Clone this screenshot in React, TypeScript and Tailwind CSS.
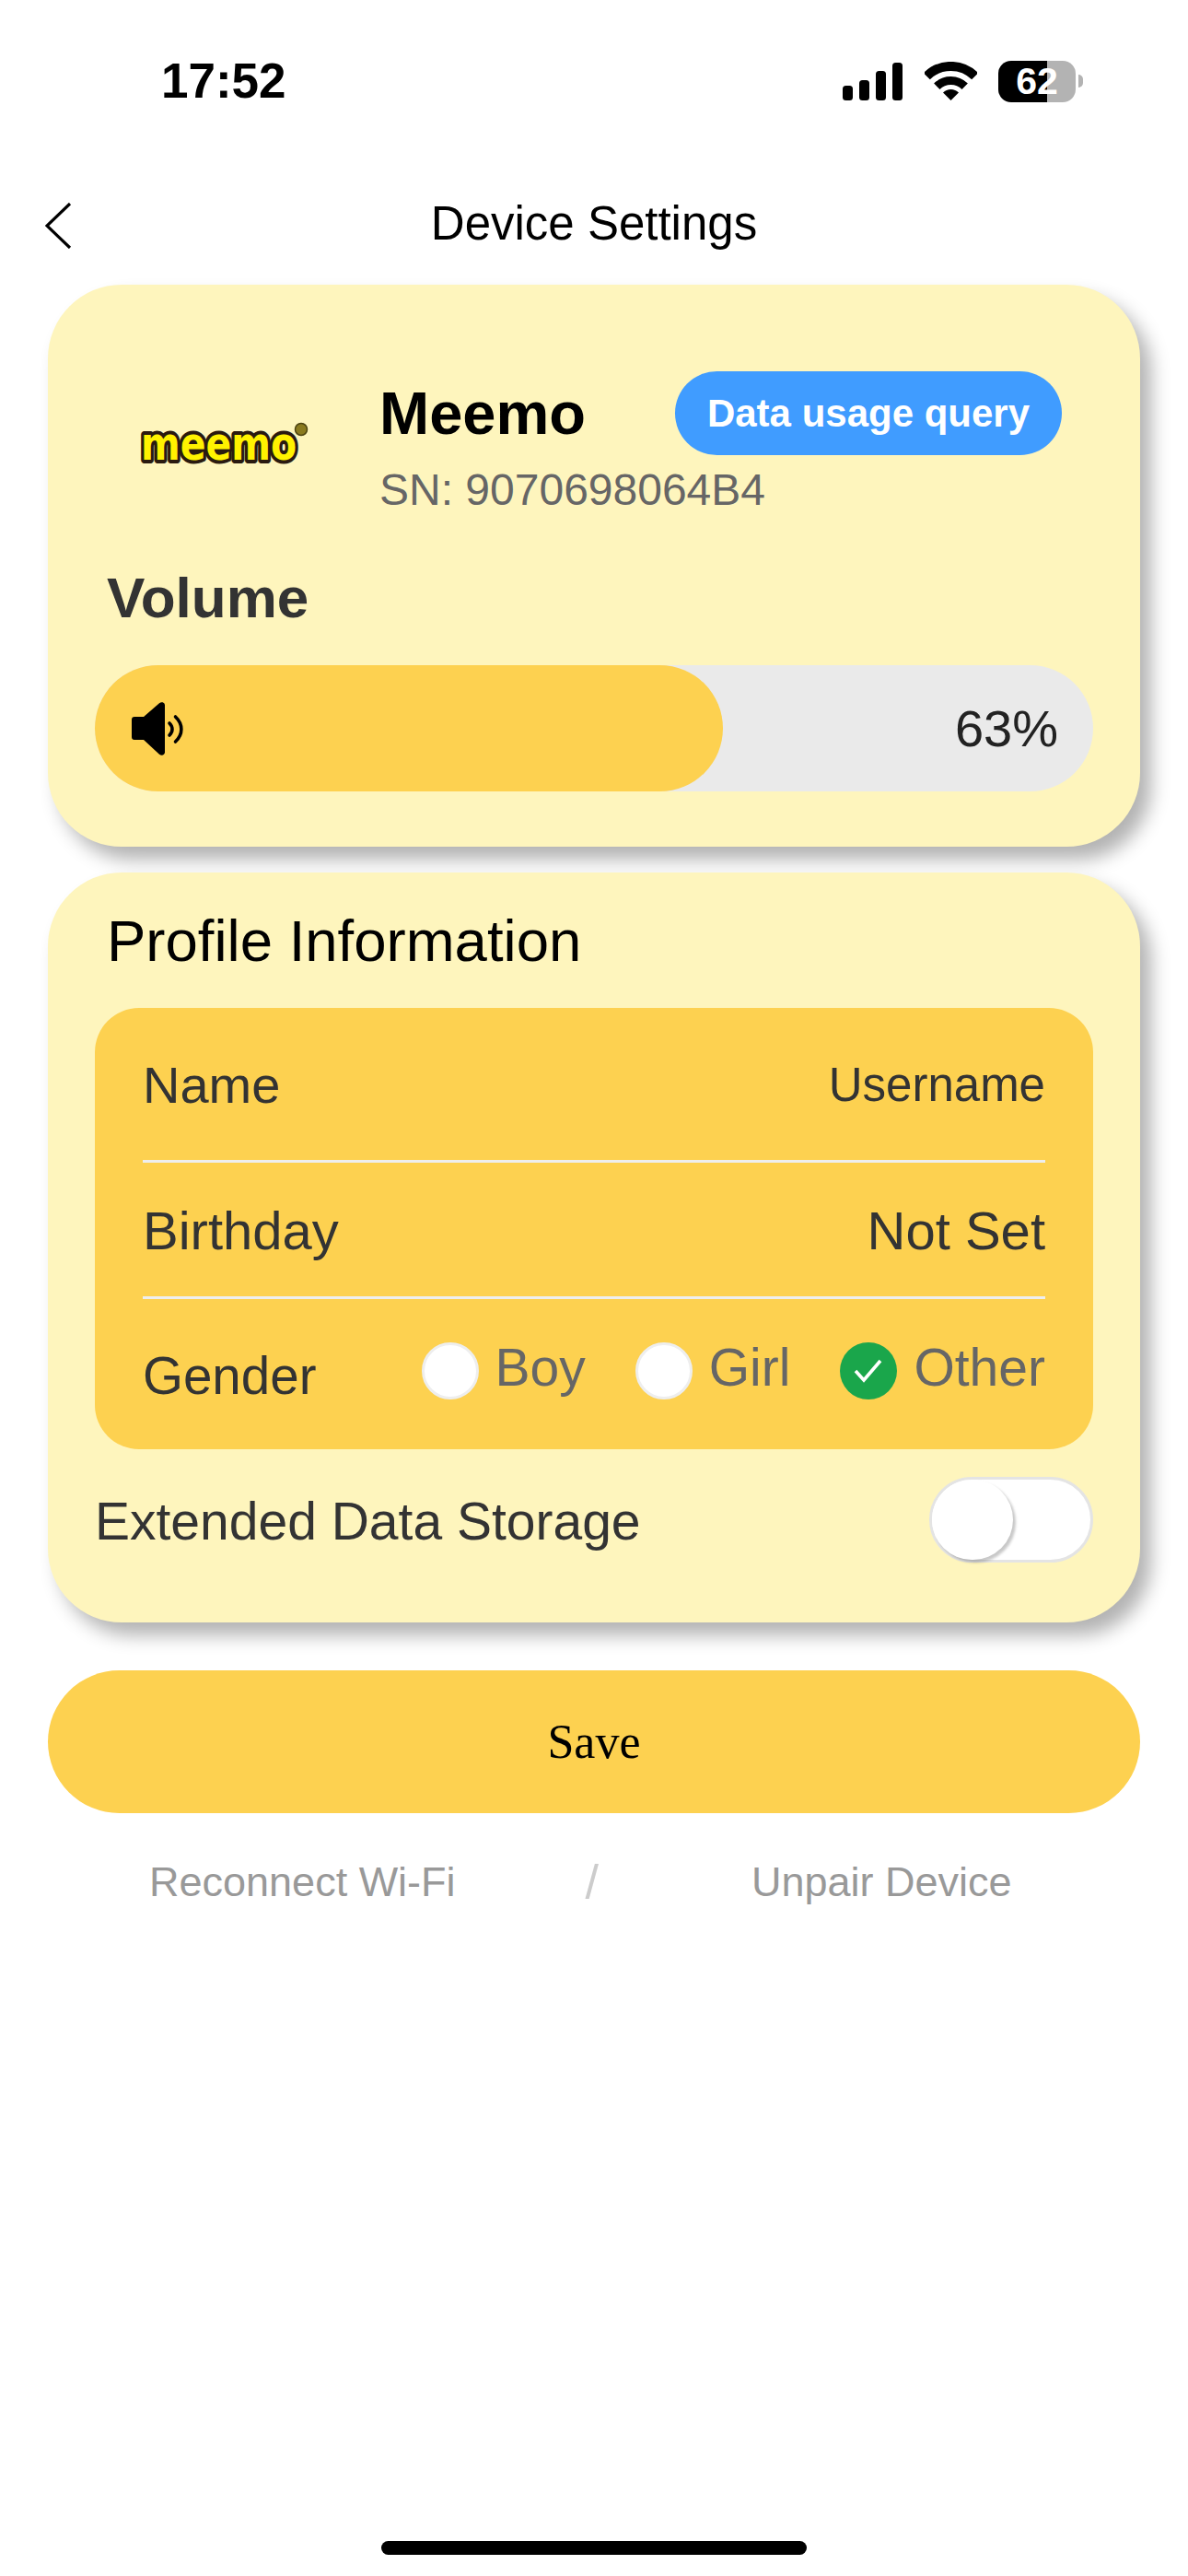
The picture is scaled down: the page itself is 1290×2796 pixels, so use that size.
const sans = "font-['Liberation_Sans',Arial,sans-serif]";

function StatusBar() {
  return (
    <div className="flex h-[176px] items-center justify-between pl-[175px] pr-[114px]">
      <span className="pb-[2px] text-[53px] font-bold leading-none text-black">17:52</span>
      <div className="flex items-center">
        <svg width="65" height="42" viewBox="0 0 65 42" fill="#000" className="mr-[24px]">
          <rect x="0" y="26" width="11" height="16" rx="3.5" />
          <rect x="18" y="20" width="11" height="22" rx="3.5" />
          <rect x="36" y="10" width="11" height="32" rx="3.5" />
          <rect x="54" y="1" width="11" height="41" rx="3.5" />
        </svg>
        <svg width="57" height="42" viewBox="0 0 57 42" className="mr-[23px]">
          <path d="M2.3 15.8A37 37 0 0 1 54.7 15.8" fill="none" stroke="#000" strokeWidth="10" />
          <path d="M13.3 26.8A21.5 21.5 0 0 1 43.7 26.8" fill="none" stroke="#000" strokeWidth="9" />
          <path d="M28.5 42L20 33.5A12 12 0 0 1 37 33.5Z" fill="#000" />
        </svg>
        <div className="flex h-[45px] w-[84px] items-center justify-center rounded-[14px] bg-[linear-gradient(90deg,#000_63%,#b3b3b3_63%)] text-[41px] font-bold leading-none text-white">
          62
        </div>
        <div className="ml-[3px] h-[14px] w-[5px] rounded-r-full bg-[#b3b3b3]" />
      </div>
    </div>
  );
}

function NavBar() {
  return (
    <div className="grid h-[133px] grid-cols-[1fr_auto_1fr] items-center">
      <div className="pl-[49px] pt-[4px]">
        <svg width="29" height="50" viewBox="0 0 29 50" fill="none" className="block">
          <path d="M27 1L2 25L27 49" stroke="#000" strokeWidth="3.2" />
        </svg>
      </div>
      <h1 className="text-[51px] font-normal leading-none text-black">Device Settings</h1>
      <div />
    </div>
  );
}

function MeemoLogo() {
  return (
    <svg width="215" height="60" viewBox="0 0 215 60" className="block">
      <text
        transform="translate(3 50) scale(0.82 1)"
        fontFamily="'DejaVu Sans', sans-serif"
        fontWeight="700"
        fontSize="50"
        fill="#fff200"
        stroke="#2a1a10"
        strokeWidth="8"
        strokeLinejoin="round"
        paintOrder="stroke"
      >
        meemo
      </text>
      <circle cx="177" cy="17" r="6.5" fill="#8a7a1e" stroke="#4c4310" strokeWidth="1.5" />
    </svg>
  );
}

function SpeakerIcon() {
  return (
    <svg width="57" height="58" viewBox="0 0 57 58" fill="none" className="block">
      <path
        d="M3 16H13L30 1.2C32.5-.6 36 .4 36 3.5V54.5C36 57.6 32.5 58.6 30 56.8L13 41H3C1 41 0 40 0 38V19C0 17 1 16 3 16Z"
        fill="#000"
      />
      <path d="M41 23C45 27 45 32 41 36" stroke="#000" strokeWidth="3.6" strokeLinecap="round" />
      <path d="M47.5 16C56 24 56 35 47.5 43" stroke="#000" strokeWidth="3.6" strokeLinecap="round" />
    </svg>
  );
}

function DeviceCard() {
  return (
    <section className="rounded-[80px] bg-[#fef5bd] px-[51px] pb-[60px] pt-[94px] shadow-[12px_14px_20px_rgba(0,0,0,0.3)]">
      <div className="flex items-center">
        <div className="w-[309px] pl-[47px]">
          <MeemoLogo />
        </div>
        <div className="flex-1 pr-[34px]">
          <div className="flex items-center justify-between">
            <span className="text-[65px] font-bold leading-none text-black">Meemo</span>
            <button className="flex h-[91px] w-[420px] items-center justify-center rounded-full bg-[#409cff] text-[42px] font-bold leading-none text-white">
              Data usage query
            </button>
          </div>
          <p className="mt-[15px] text-[48px] leading-[46px] text-[#666666]">SN: 9070698064B4</p>
        </div>
      </div>
      <h2 className="mt-[58px] pl-[13px] text-[62px] font-bold leading-[72px] text-[#333333]">Volume</h2>
      <div className="mt-[37px] flex h-[137px] items-center justify-between rounded-full bg-[#eaeaea] pr-[38px]">
        <div className="flex h-full w-[682px] items-center rounded-full bg-[#fdd150] pl-[40px]">
          <SpeakerIcon />
        </div>
        <span className="text-[56px] leading-none text-[#222222]">63%</span>
      </div>
    </section>
  );
}

function GenderOption({ label, checked }: { label: string; checked?: boolean }) {
  return (
    <div className="flex items-center gap-[18px]">
      {checked ? (
        <span className="flex h-[62px] w-[62px] items-center justify-center rounded-full bg-[#1aa64b]">
          <svg width="62" height="62" viewBox="0 0 62 62" fill="none" className="block">
            <path d="M17 31L26 41L44 20" stroke="#fff" strokeWidth="3.6" />
          </svg>
        </span>
      ) : (
        <span className="h-[62px] w-[62px] rounded-full border-[3px] border-[#eeeeee] bg-white" />
      )}
      <span className="-mt-[6px] text-[57px] leading-none text-[#666666]">{label}</span>
    </div>
  );
}

function ProfileCard() {
  return (
    <section className="mt-[28px] rounded-[80px] bg-[#fef5bd] px-[51px] pb-[65px] pt-[38px] shadow-[12px_14px_20px_rgba(0,0,0,0.3)]">
      <h2 className="pl-[13px] text-[63.5px] font-normal leading-[72px] text-black">Profile Information</h2>
      <div className="mt-[37px] rounded-[48px] bg-[#fdd150] px-[52px] text-[#333333]">
        <div className="flex h-[168px] items-center justify-between border-b-[3px] border-[#eeeeee] pt-[2px]">
          <span className="text-[56px] leading-none">Name</span>
          <span className="text-[51px] leading-none">Username</span>
        </div>
        <div className="flex h-[148px] items-center justify-between border-b-[3px] border-[#eeeeee] pt-[2px]">
          <span className="text-[58px] leading-none">Birthday</span>
          <span className="text-[58px] leading-none">Not Set</span>
        </div>
        <div className="flex h-[163px] items-center justify-between">
          <span className="mt-[6px] text-[56.5px] leading-none">Gender</span>
          <div className="-mt-[8px] flex items-center gap-[54px]">
            <GenderOption label="Boy" />
            <GenderOption label="Girl" />
            <GenderOption label="Other" checked />
          </div>
        </div>
      </div>
      <div className="mt-[30px] flex items-center justify-between">
        <span className="pt-[4px] text-[57px] leading-none text-[#333333]">Extended Data Storage</span>
        <div className="flex h-[93px] w-[178px] items-center rounded-full border-[3px] border-[#e4e4e4] bg-white">
          <div className="h-[87px] w-[88px] rounded-full bg-white shadow-[3px_3px_3px_rgba(0,0,0,0.22)]" />
        </div>
      </div>
    </section>
  );
}

export default function App() {
  return (
    <div className={`${sans} flex h-[2796px] w-[1290px] flex-col overflow-hidden bg-white`}>
      <StatusBar />
      <NavBar />
      <main className="px-[52px]">
        <DeviceCard />
        <ProfileCard />
        <button className="mt-[52px] flex h-[155px] w-full items-center justify-center rounded-full bg-[#fdd150] font-['Liberation_Serif',serif] text-[52px] leading-none text-black">
          Save
        </button>
      </main>
      <div className="mt-[50px] flex pl-[162px] text-[45px] leading-[50px] text-[#999999]">
        <span>Reconnect Wi-Fi</span>
        <span className="ml-[141px] text-[52px] text-[#cccccc]">/</span>
        <span className="ml-[166px]">Unpair Device</span>
      </div>
      <div className="mb-[23px] ml-[414px] mt-auto h-[15px] w-[462px] rounded-full bg-black" />
    </div>
  );
}
